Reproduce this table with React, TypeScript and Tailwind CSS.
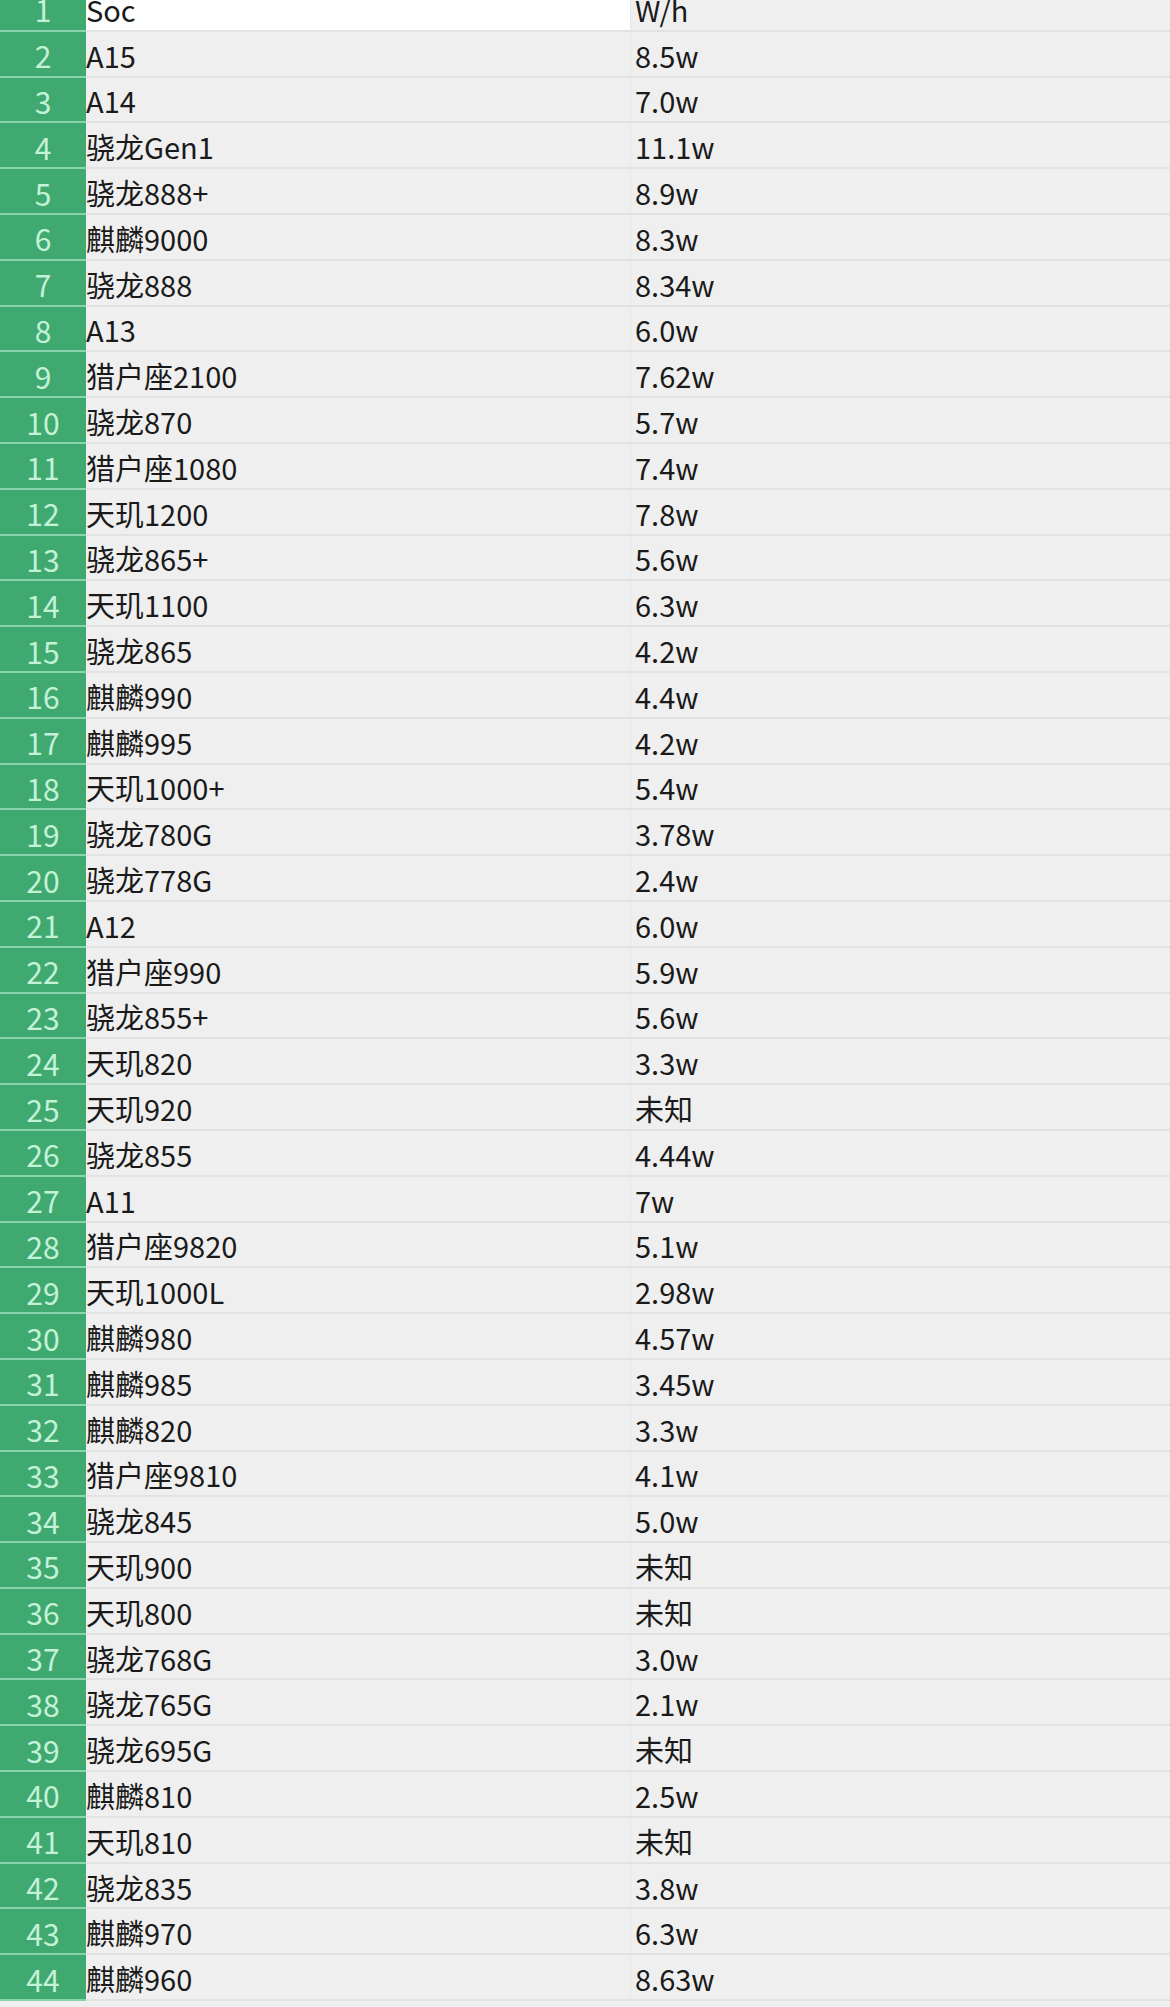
const rows: [string, string][] = [
  ["Soc", "W/h"],
  ["A15", "8.5w"],
  ["A14", "7.0w"],
  ["骁龙Gen1", "11.1w"],
  ["骁龙888+", "8.9w"],
  ["麒麟9000", "8.3w"],
  ["骁龙888", "8.34w"],
  ["A13", "6.0w"],
  ["猎户座2100", "7.62w"],
  ["骁龙870", "5.7w"],
  ["猎户座1080", "7.4w"],
  ["天玑1200", "7.8w"],
  ["骁龙865+", "5.6w"],
  ["天玑1100", "6.3w"],
  ["骁龙865", "4.2w"],
  ["麒麟990", "4.4w"],
  ["麒麟995", "4.2w"],
  ["天玑1000+", "5.4w"],
  ["骁龙780G", "3.78w"],
  ["骁龙778G", "2.4w"],
  ["A12", "6.0w"],
  ["猎户座990", "5.9w"],
  ["骁龙855+", "5.6w"],
  ["天玑820", "3.3w"],
  ["天玑920", "未知"],
  ["骁龙855", "4.44w"],
  ["A11", "7w"],
  ["猎户座9820", "5.1w"],
  ["天玑1000L", "2.98w"],
  ["麒麟980", "4.57w"],
  ["麒麟985", "3.45w"],
  ["麒麟820", "3.3w"],
  ["猎户座9810", "4.1w"],
  ["骁龙845", "5.0w"],
  ["天玑900", "未知"],
  ["天玑800", "未知"],
  ["骁龙768G", "3.0w"],
  ["骁龙765G", "2.1w"],
  ["骁龙695G", "未知"],
  ["麒麟810", "2.5w"],
  ["天玑810", "未知"],
  ["骁龙835", "3.8w"],
  ["麒麟970", "6.3w"],
  ["麒麟960", "8.63w"],
];

const font = {
  fontFamily: '"Noto Sans CJK SC", "Noto Sans", sans-serif',
};

export default function App() {
  return (
    <div className="w-[1170px] h-[2007px] overflow-hidden bg-[#efefef] text-[#1a1a1a]" style={font}>
      <div className="-mt-[14px] flex flex-col">
        {rows.map(([name, val], i) => (
          <div key={i} className="flex h-[45.8px] shrink-0">
            <div className="w-[86px] shrink-0 bg-[#3fa96f] border-b-2 border-[#8bd3aa] flex items-center justify-center text-[30px] leading-none text-[#c4f2d8] pt-[3px]">
              {i + 1}
            </div>
            <div
              className={`w-[544px] shrink-0 border-b-2 border-[#e2e2e2] flex items-center text-[29px] leading-none pt-[3px] ${
                i === 0 ? "bg-white" : "bg-[#efefef]"
              }`}
            >
              {name}
            </div>
            <div className="flex-1 border-b-2 border-[#e2e2e2] border-l border-l-[#e6e6e6] flex items-center pl-[4px] text-[29px] leading-none pt-[3px] bg-[#efefef]">
              {val}
            </div>
          </div>
        ))}
        <div className="h-[20px] bg-[#efefef]" />
      </div>
    </div>
  );
}
